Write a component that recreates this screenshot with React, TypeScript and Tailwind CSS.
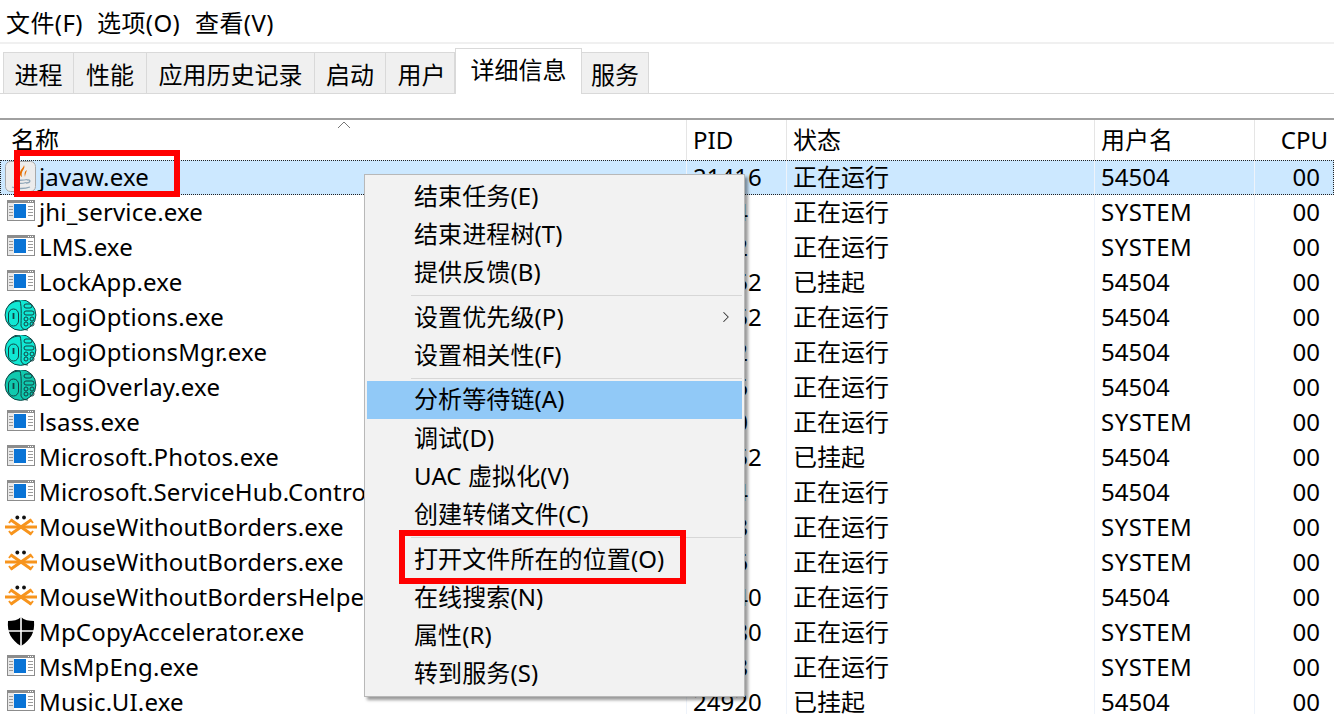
import { ChevronRight } from "lucide-react";

type IconKind = "java" | "app" | "logi" | "logi2" | "mouse" | "shield";

type Row = {
  name: string;
  pid: string;
  status: string;
  user: string;
  icon: IconKind;
};

const rows: Row[] = [
  { name: "javaw.exe", pid: "21416", status: "正在运行", user: "54504", icon: "java" },
  { name: "jhi_service.exe", pid: "6024", status: "正在运行", user: "SYSTEM", icon: "app" },
  { name: "LMS.exe", pid: "6112", status: "正在运行", user: "SYSTEM", icon: "app" },
  { name: "LockApp.exe", pid: "13652", status: "已挂起", user: "54504", icon: "app" },
  { name: "LogiOptions.exe", pid: "17252", status: "正在运行", user: "54504", icon: "logi" },
  { name: "LogiOptionsMgr.exe", pid: "9312", status: "正在运行", user: "54504", icon: "logi" },
  { name: "LogiOverlay.exe", pid: "8236", status: "正在运行", user: "54504", icon: "logi2" },
  { name: "lsass.exe", pid: "1020", status: "正在运行", user: "SYSTEM", icon: "app" },
  { name: "Microsoft.Photos.exe", pid: "26152", status: "已挂起", user: "54504", icon: "app" },
  { name: "Microsoft.ServiceHub.Controller.exe", pid: "9824", status: "正在运行", user: "54504", icon: "app" },
  { name: "MouseWithoutBorders.exe", pid: "7128", status: "正在运行", user: "SYSTEM", icon: "mouse" },
  { name: "MouseWithoutBorders.exe", pid: "2356", status: "正在运行", user: "SYSTEM", icon: "mouse" },
  { name: "MouseWithoutBordersHelper.exe", pid: "18340", status: "正在运行", user: "54504", icon: "mouse" },
  { name: "MpCopyAccelerator.exe", pid: "10680", status: "正在运行", user: "SYSTEM", icon: "shield" },
  { name: "MsMpEng.exe", pid: "4188", status: "正在运行", user: "SYSTEM", icon: "app" },
  { name: "Music.UI.exe", pid: "24920", status: "已挂起", user: "54504", icon: "app" },
];

const menuGroups = [
  ["结束任务(E)", "结束进程树(T)", "提供反馈(B)"],
  ["设置优先级(P)", "设置相关性(F)"],
  ["分析等待链(A)", "调试(D)", "UAC 虚拟化(V)", "创建转储文件(C)"],
  ["打开文件所在的位置(O)", "在线搜索(N)", "属性(R)", "转到服务(S)"],
];

function AppIcon() {
  return (
    <svg width="32" height="32" viewBox="0 0 32 32">
      <rect x="2.5" y="4.5" width="27" height="20" fill="#fff" stroke="#8c8c8c" />
      <rect x="2" y="4" width="28" height="3" fill="#8c8c8c" />
      <rect x="23" y="5" width="1" height="1" fill="#fff" />
      <rect x="25" y="5" width="1" height="1" fill="#fff" />
      <rect x="27" y="5" width="1" height="1" fill="#fff" />
      <rect x="3" y="7" width="6" height="17" fill="#e8e8e8" />
      <rect x="9" y="8" width="12" height="14" fill="#0a74d6" />
      <path d="M4 10.5h4M4 13.5h4M4 16.5h4M4 19.5h4M23 10.5h5M23 13.5h5M23 16.5h5M23 19.5h5" stroke="#9a9a9a" />
    </svg>
  );
}

function JavaIcon() {
  return (
    <svg width="32" height="32" viewBox="0 0 32 32">
      <rect x="0.5" y="0.5" width="30" height="30" rx="5" fill="#ececec" stroke="#a9a9a9" />
      <path d="M19 4c2 4-4 6-2 12-2-1-3-4-1-7 1-2 3-3 3-5zM22 9c-2 1-3 3-2 7 0-2 1-4 2-7z" fill="#e76f00" />
      <path d="M9 18.5c3 1 10 1 13 0M10 21.5c3 1 8 1 11 0M7 26c4 2 13 2 18 0M22 19c4-1 4 3-1 3" fill="none" stroke="#8fa6b8" strokeWidth="1.3" />
    </svg>
  );
}

function LogiIcon({ dark }: { dark?: boolean }) {
  return (
    <svg className="overflow-visible" width="32" height="32" viewBox="0 0 32 32">
      <circle cx="15.5" cy="14" r="15.4" fill={dark ? "#10c9ae" : "#10e8d4"} stroke="#124444" strokeWidth="1" />
      <g fill="none" stroke="#124444" strokeWidth="1">
        <rect x="3.5" y="8" width="10" height="17" rx="5" />
        <path d="M8.5 12v6" strokeWidth="1.8" />
        <path d="M4 4c3-3 7-4 11-4 2 6 1 19 1 25 1 3 4 4 7 4" />
        <rect x="19" y="3" width="8" height="4" rx="2" />
        <rect x="19" y="10" width="10" height="4" rx="2" />
        <circle cx="21" cy="18" r="2" />
        <circle cx="27" cy="18" r="2" />
        <circle cx="21" cy="23" r="2" />
        <circle cx="27" cy="23" r="2" />
      </g>
    </svg>
  );
}

function MouseIcon() {
  return (
    <svg width="32" height="32" viewBox="0 0 32 32">
      <g stroke="#f7941d" strokeWidth="3" fill="none">
        <path d="M0 16h32" />
        <path d="M6 9l20 14M26 9L6 23" />
        <path d="M4 12l3-4M28 12l-3-4M4 20l3 4M28 20l-3 4" strokeWidth="2" />
      </g>
      <circle cx="12.3" cy="6.5" r="1.9" fill="#111" />
      <circle cx="19" cy="6.5" r="1.9" fill="#111" />
    </svg>
  );
}

function ShieldIcon() {
  return (
    <svg width="32" height="32" viewBox="0 0 32 32">
      <path d="M16 1c3 3 8 4 13 4 1 11-3 19-13 25C6 24 2 16 3 5c5 0 10-1 13-4z" fill="#000" />
      <path d="M16 0v31M2 15h28" stroke="#fff" strokeWidth="1.6" />
    </svg>
  );
}

function RowIcon({ kind }: { kind: IconKind }) {
  if (kind === "java") return <JavaIcon />;
  if (kind === "logi") return <LogiIcon />;
  if (kind === "logi2") return <LogiIcon dark />;
  if (kind === "mouse") return <MouseIcon />;
  if (kind === "shield") return <ShieldIcon />;
  return <AppIcon />;
}

function Tab({ label, className }: { label: string; className: string }) {
  return (
    <div className={`flex h-[41px] items-center justify-center border-t border-r border-[#d9d9d9] bg-[#f0f0f0] pt-[3px] ${className}`}>
      {label}
    </div>
  );
}

export default function App() {
  return (
    <div className="relative h-[714px] w-[1334px] overflow-hidden bg-white font-['Noto_Sans','Noto_Sans_CJK_SC',sans-serif] text-[24px] leading-[30px] text-black">
      <div className="flex h-[44px] items-center border-b-2 border-[#f0f0f0] pl-[6px] pt-[4px] tracking-[0.4px]">
        <span className="w-[91px]">文件(F)</span>
        <span className="w-[98px]">选项(O)</span>
        <span>查看(V)</span>
      </div>

      <div className="flex h-[50px] items-end border-b border-[#d9d9d9] pl-[3px]">
        <Tab label="进程" className="w-[71px] border-l" />
        <Tab label="性能" className="w-[73px]" />
        <Tab label="应用历史记录" className="w-[168px]" />
        <Tab label="启动" className="w-[71px]" />
        <Tab label="用户" className="w-[69px] pl-[3px]" />
        <div className="relative -mb-px flex h-[46px] w-[127px] items-center justify-center border-x border-t border-[#d9d9d9] bg-white pb-[3px]">
          详细信息
        </div>
        <Tab label="服务" className="w-[67px]" />
      </div>

      <div className="mt-[24px] border-t-2 border-[#a0a0a0]">
        <div className="relative grid h-[40px] grid-cols-[687px_100px_308px_160px_79px] items-center">
          <div className="flex h-full items-center border-r border-[#e5e5e5] pl-[11px]">名称</div>
          <div className="flex h-full items-center border-r border-[#e5e5e5] pl-[6px]">PID</div>
          <div className="flex h-full items-center border-r border-[#e5e5e5] pl-[6px]">状态</div>
          <div className="flex h-full items-center border-r border-[#e5e5e5] pl-[6px]">用户名</div>
          <div className="flex h-full items-center justify-end pr-[6px]">CPU</div>
          <svg className="absolute left-[337px] top-[0px]" width="14" height="9" viewBox="0 0 14 9">
            <path d="M1 8l6-6 6 6" fill="none" stroke="#777" />
          </svg>
        </div>

        {rows.map((r, i) => (
          <div
            key={r.name + i}
            className={`grid h-[35px] grid-cols-[687px_100px_308px_160px_79px] items-center ${i === 0 ? "bg-[#cce8ff] outline-1 -outline-offset-1 outline-dotted outline-[#222]" : ""}`}
          >
            <div className="flex h-full items-center overflow-hidden whitespace-nowrap border-r border-[#eef3fa] pb-[2px] pl-[5px]">
              <span className="shrink-0"><RowIcon kind={r.icon} /></span>
              <span className="ml-[2px] tracking-[0.17px]">{r.name}</span>
            </div>
            <div className="flex h-full items-center border-r border-[#eef3fa] pb-[2px] pl-[6px]">{r.pid}</div>
            <div className="flex h-full items-center border-r border-[#eef3fa] pb-[2px] pl-[6px]">{r.status}</div>
            <div className={`flex h-full items-center border-r border-[#eef3fa] pb-[2px] pl-[6px] ${r.user === "SYSTEM" ? "tracking-[0.5px]" : ""}`}>{r.user}</div>
            <div className="flex h-full items-center justify-end pb-[2px] pr-[14px]">00</div>
          </div>
        ))}
      </div>

      <div className="absolute left-[364px] top-[174px] w-[381px] border border-[#b8b8b8] bg-[#f2f2f2] py-[3px] pl-[2px] pr-[2px] shadow-[3px_3px_3px_rgba(0,0,0,0.4)]">
        {menuGroups.map((group, gi) => (
          <div key={gi}>
            {gi > 0 && (
              <div className={`flex items-center pl-[44px] ${gi === 2 ? "h-[6px]" : "h-[7px]"}`}>
                <div className="h-px w-full bg-[#d7d7d7]" />
              </div>
            )}
            {group.map((item) => (
              <div
                key={item}
                className={`relative flex h-[38px] items-center pb-[2px] pl-[47px] tracking-[0.1px] ${item === "分析等待链(A)" ? "mb-px bg-[#91c9f7]" : ""}`}
              >
                {item}
                {item === "设置优先级(P)" && (
                  <ChevronRight className="absolute right-[7px] top-[9px]" size={18} strokeWidth={1.4} color="#333" />
                )}
              </div>
            ))}
          </div>
        ))}
      </div>

      <div className="absolute left-[14px] top-[150px] h-[47px] w-[166px] border-[6px] border-[#ff0000]" />
      <div className="absolute left-[399px] top-[530px] h-[54px] w-[287px] border-[6px] border-[#ff0000]" />
    </div>
  );
}
